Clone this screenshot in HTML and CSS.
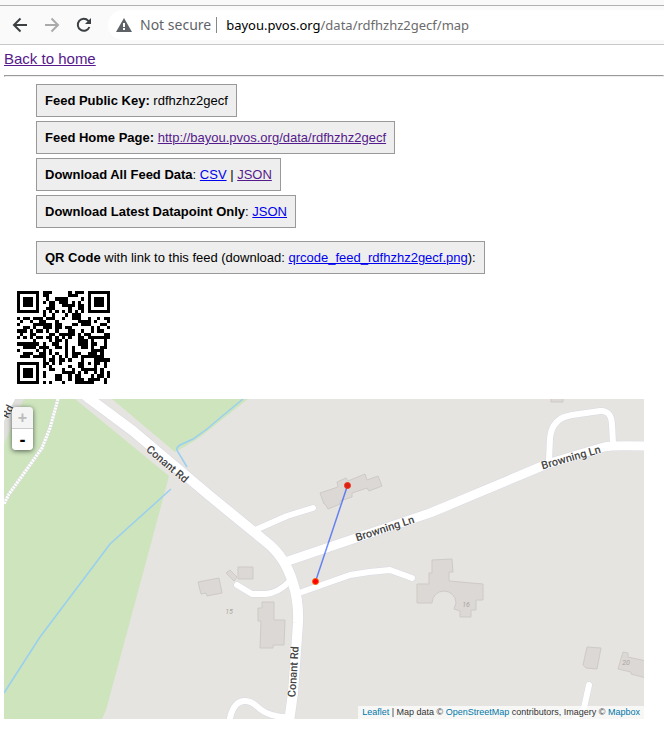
FILE: index.html
```html
<!DOCTYPE html>
<html lang="en">
<head>
<meta charset="utf-8">
<title>Feed map</title>
<link rel="stylesheet" href="styles.css">
</head>
<body>
<header class="toolbar">
  <button class="nav" type="button" aria-label="Back"><svg viewBox="0 0 16 16"><path d="M15 8H2M8.500 1.500L2 8l6.500 6.500"/></svg></button>
  <button class="nav nav-off" type="button" aria-label="Forward"><svg viewBox="0 0 16 16"><path d="M1 8h13M7.500 1.500L14 8l-6.500 6.500"/></svg></button>
  <button class="nav" type="button" aria-label="Reload"><svg viewBox="0 0 16 16"><path d="M13.400 10A6 6 0 1 1 12.300 3.800L14 5.500"/><path class="solid" d="M15 1v6H9z"/></svg></button>
  <div class="address">
    <svg class="warn" viewBox="0 0 16 14"><path d="M8 0l8 14H0z"/><path class="mark" d="M8 5v4M8 10v2"/></svg>
    <span class="secure">Not secure</span>
    <span class="url"><b>bayou.pvos.org</b>/data/rdfhzhz2gecf/map</span>
  </div>
</header>
<main>
  <a class="home visited" href="#">Back to home</a>
  <hr>
  <ul class="feed">
    <li><b>Feed Public Key:</b> rdfhzhz2gecf</li>
    <li><b>Feed Home Page:</b> <a class="visited" href="#">http://bayou.pvos.org/data/rdfhzhz2gecf</a></li>
    <li><b>Download All Feed Data</b>: <a href="#">CSV</a> | <a class="visited" href="#">JSON</a></li>
    <li><b>Download Latest Datapoint Only</b>: <a href="#">JSON</a></li>
    <li class="qr-note"><b>QR Code</b> with link to this feed (download: <a href="#">qrcode_feed_rdfhzhz2gecf.png</a>):</li>
  </ul>
  <svg class="qr" viewBox="-4 -4 37 37" role="img" aria-label="QR code"><path id="qr"/></svg>
  <section class="map">
    <svg class="tiles" viewBox="4 399 640 320">
      <rect class="land" x="4" y="399" width="640" height="320"/>
      <path class="park" d="M4 399H75L169 476 146 562 106 710 102 719H4zM112 399L175 452Q198 440 210 429L248 399z"/>
      <path class="stream" d="M243 399L220 418 207 429 193 439 180 445Q175 448 178 452L187 467M171 489L110 544 98 560 40 637 4 693"/>
      <path class="trail-edge" d="M58 399L50 428 42 448 22 476 9 494 4 504"/>
      <path class="trail" d="M58 399L50 428 42 448 22 476 9 494 4 504"/>
      <path class="verge" d="M18 390L-4 440"/>
      <g class="house">
        <path d="M320 493L338 487 337 482 346 478 348 481 365 474 367 480 378 476 382 486 369 491 367 488 352 493V497L340 501V504L328 509 325 504 324 504z"/>
        <path d="M198 582L219 578 222 593 207 596 206 593 201 594zM238 567h15v12h-15zM226 573L230 570 237 577 234 581z"/>
        <path d="M262 602H274V620H285L284 645H273V648H260L261 621H258V608H262z"/>
        <path d="M417 584H429V573H432V560L452 559 453 572H449V581L483 584V600H476V610H471V617H460V611L454 609 456 603A12 12 0 0 0 432 603H417z"/>
        <path d="M587 647L601 648 597 669 586 668 583 665zM623 652L628 653V657L646 661V678L631 674V672L618 669zM551 398h12v4h-12z"/>
      </g>
      <g class="road edge">
        <path class="wide" d="M15 388L-4 426M80 391L90 399 133 431 210 496 265 541Q285 556 293 583 299 602 298 623L293 693 289 722"/>
        <path class="mid" d="M285 562L430 513 447 506 547 464 580 454 604 447Q610 445 648 446"/>
        <path d="M549 460L550 438Q552 418 572 415L600 411Q611 410 612 424L613 443M253 531L287 516 313 508M299 593L350 575 369 572 390 570 412 578M290 581Q278 593 266 594H252L237 585M229 724Q232 701 245 701 252 701 260 709 270 717 288 717M589 685L584 708 573 722"/>
      </g>
      <g class="road">
        <path class="wide" d="M15 388L-4 426M80 391L90 399 133 431 210 496 265 541Q285 556 293 583 299 602 298 623L293 693 289 722"/>
        <path class="mid" d="M285 562L430 513 447 506 547 464 580 454 604 447Q610 445 648 446"/>
        <path d="M549 460L550 438Q552 418 572 415L600 411Q611 410 612 424L613 443M253 531L287 516 313 508M299 593L350 575 369 572 390 570 412 578M290 581Q278 593 266 594H252L237 585M229 724Q232 701 245 701 252 701 260 709 270 717 288 717M589 685L584 708 573 722"/>
      </g>
      <g class="street">
        <text transform="translate(165 467) rotate(40)">Conant Rd</text>
        <text transform="translate(386 532) rotate(-18)">Browning Ln</text>
        <text transform="translate(572 461) rotate(-16)">Browning Ln</text>
        <text transform="translate(297 672) rotate(-86)">Conant Rd</text>
        <text transform="translate(11 413) rotate(-64)">Rd</text>
      </g>
      <g class="number">
        <text x="229" y="614">15</text><text x="466" y="607">16</text><text x="626" y="665">20</text>
      </g>
      <path class="track" d="M347.500 485.500L315.500 581.500"/>
      <circle class="fix" cx="347.500" cy="485.500" r="3"/><circle class="fix bright" cx="315.500" cy="581.500" r="3"/>
    </svg>
    <div class="zoom">
      <button type="button" aria-label="Zoom in" disabled>+</button>
      <button type="button" aria-label="Zoom out">-</button>
    </div>
    <p class="credit"><a href="#">Leaflet</a> | Map data © <a href="#">OpenStreetMap</a> contributors, Imagery © <a href="#">Mapbox</a></p>
  </section>
</main>
<script src="qr.js"></script>
</body>
</html>
```
FILE: styles.css
```css
* { box-sizing: border-box; }
body { margin: 0; background: #fff; color: #000; font-family: "Liberation Sans", sans-serif; font-size: 13px; }
a { color: #00e; }
a.visited { color: #551a8b; }

.toolbar { display: flex; align-items: center; height: 45px; padding: 5px 0 0 12px; background: linear-gradient(#f9f9f9 5px, #b0b0b0 5px, #b0b0b0 6px, #fafafa 6px); border-bottom: 1px solid #c8c8c8; }
.nav { width: 16px; height: 16px; margin-right: 16px; padding: 0; border: 0; background: none; }
.nav svg { display: block; width: 16px; height: 16px; fill: none; stroke: #3c4043; stroke-width: 2; }
.nav-off svg { stroke: #aaa; }
.nav .solid { fill: #3c4043; stroke: none; }
.address { display: flex; flex: 1; align-items: center; height: 30px; padding-left: 8px; border-radius: 15px 0 0 15px; background: #fff; font: 14px "Noto Sans", sans-serif; white-space: nowrap; }
.warn { width: 16px; height: 14px; margin-right: 8px; fill: #5f6368; }
.mark { stroke: #fff; stroke-width: 2; }
.secure { padding-right: 5px; border-right: 1px solid #888; color: #5f6368; line-height: 16px; }
.url { padding-left: 9px; color: #6b6b6b; font-size: 13px; }
.url b { color: #000; font-weight: 400; }

main { padding: 5px 0 16px 4px; }
.home { display: block; width: fit-content; font-size: 15px; line-height: 17px; }
hr { margin: 8px 0 7px; }
.feed { margin: 0; padding: 0 0 0 32px; list-style: none; }
.feed li { width: fit-content; margin-bottom: 4px; padding: 8px; border: 1px solid #999; background: #eee; line-height: 15px; }
.feed .qr-note { margin-top: 13px; }
.qr { display: block; width: 119px; height: 119px; margin-bottom: 2px; shape-rendering: crispEdges; }

.map { position: relative; max-width: 640px; margin-right: 4px; }
.tiles { display: block; width: 100%; }
.land { fill: #e5e4e0; }
.park { fill: #cde4bd; }
.stream { fill: none; stroke: #99cff0; stroke-width: 1.5; }
.trail-edge { fill: none; stroke: #d9dfd8; stroke-width: 4; }
.trail { fill: none; stroke: #fff; stroke-width: 3; stroke-dasharray: 2 1; }
.verge { fill: none; stroke: #dfdfdb; stroke-width: 18; }
.house { fill: #dcd8d5; stroke: #cecac7; stroke-width: 1; }
.road { fill: none; stroke: #fff; stroke-width: 6; stroke-linecap: round; stroke-linejoin: round; }
.road .wide { stroke-width: 10; }
.road .mid { stroke-width: 9; }
.edge { stroke: #d9d9e4; stroke-width: 7; }
.edge .wide { stroke-width: 11; }
.edge .mid { stroke-width: 10; }
.street { fill: #444; stroke: #fff; stroke-width: 1; paint-order: stroke; font: 500 11px Roboto, sans-serif; text-anchor: middle; }
.number { fill: #aaa6a2; font: italic 7px Roboto, sans-serif; text-anchor: middle; }
.track { stroke: #03f; stroke-width: 1.5; opacity: .55; }
.fix { fill: #dc2014; stroke: #e8341c; stroke-width: 1; }
.bright { fill: #f00; stroke: #ff5a00; }

.zoom { position: absolute; top: 8px; left: 8px; width: 21px; border-radius: 4px; box-shadow: 0 1px 5px #0009; }
.zoom button { display: block; width: 100%; height: 21px; padding: 0; border: 0; border-radius: 0 0 4px 4px; background: #fff; color: #000; font: bold 18px/20px "Liberation Sans", sans-serif; }
.zoom button:first-child { height: 22px; border-bottom: 1px solid #ccc; border-radius: 4px 4px 0 0; background: #f4f4f4; color: #bbb; font-size: 16px; }
.credit { position: absolute; right: 0; bottom: 0; margin: 0; padding: 0 4px; background: #ffffffb3; color: #333; font-size: 9px; line-height: 13px; white-space: nowrap; }
.credit a { color: #0078a8; text-decoration: none; }
```
FILE: qr.js
```js
// Version 3 QR code, error correction level M.
const SIZE = 29, DATA = 44, EC = 26, MASK = 3;

function multiply(a, b) {
  let r = 0;
  for (; b; b >>= 1) {
    if (b & 1) r ^= a;
    a <<= 1;
    if (a & 256) a ^= 0x11d;
  }
  return r;
}

function encode(text) {
  const bits = [];
  const put = (v, n) => { for (let i = n - 1; i >= 0; i--) bits.push((v >> i) & 1); };
  put(4, 4);
  put(text.length, 8);
  for (const c of text) put(c.charCodeAt(0), 8);
  put(0, 4);
  const data = [];
  for (let i = 0; i < bits.length; i += 8) data.push(parseInt(bits.slice(i, i + 8).join(''), 2));
  for (let p = 0xec; data.length < DATA; p ^= 0xfd) data.push(p);
  let gen = [1], root = 1;
  for (let i = 0; i < EC; i++) {
    const next = gen.concat(0);
    gen.forEach((g, j) => { next[j + 1] ^= multiply(g, root); });
    gen = next;
    root = multiply(root, 2);
  }
  const rem = data.concat(Array(EC).fill(0));
  for (let i = 0; i < DATA; i++) {
    const f = rem[i];
    gen.forEach((g, j) => { rem[i + j] ^= multiply(g, f); });
  }
  return data.concat(rem.slice(DATA)).flatMap(b => [7, 6, 5, 4, 3, 2, 1, 0].map(i => (b >> i) & 1));
}

function build(text) {
  const all = encode(text), N = SIZE;
  const m = Array.from({ length: N }, () => Array(N).fill(null));
  for (const [r0, c0] of [[0, 0], [0, N - 7], [N - 7, 0]])
    for (let r = -1; r < 8; r++) for (let c = -1; c < 8; c++) {
      const y = r0 + r, x = c0 + c;
      if (y < 0 || x < 0 || y >= N || x >= N) continue;
      const d = Math.max(Math.abs(r - 3), Math.abs(c - 3));
      m[y][x] = d !== 2 && d < 4 ? 1 : 0;
    }
  for (let i = 8; i < N - 8; i++) m[6][i] = m[i][6] = 1 - i % 2;
  for (let r = -2; r < 3; r++) for (let c = -2; c < 3; c++)
    m[22 + r][22 + c] = Math.max(Math.abs(r), Math.abs(c)) !== 1 ? 1 : 0;
  let e = MASK << 10;
  for (let i = 14; i >= 10; i--) if ((e >> i) & 1) e ^= 0x537 << (i - 10);
  const f = ((MASK << 10) | e) ^ 0x5412;
  const spots = [[8,0],[8,1],[8,2],[8,3],[8,4],[8,5],[8,7],[8,8],[7,8],[5,8],[4,8],[3,8],[2,8],[1,8],[0,8]];
  spots.forEach(([r, c], i) => {
    const b = (f >> (14 - i)) & 1;
    m[r][c] = b;
    if (i < 7) m[N - 1 - i][8] = b; else m[8][N - 15 + i] = b;
  });
  m[N - 8][8] = 1;
  let k = 0, up = true;
  for (let c = N - 1; c > 0; c -= 2) {
    if (c === 6) c--;
    for (let i = 0; i < N; i++) {
      const r = up ? N - 1 - i : i;
      for (const x of [c, c - 1])
        if (m[r][x] === null) m[r][x] = (all[k++] || 0) ^ ((r + x) % 3 === 0 ? 1 : 0);
    }
    up = !up;
  }
  return m.map((row, r) => row.map((v, c) => (v ? `M${c} ${r}h1v1h-1z` : '')).join('')).join('');
}

document.getElementById('qr').setAttribute('d', build('http://bayou.pvos.org/data/rdfhzhz2gecf'));
```
